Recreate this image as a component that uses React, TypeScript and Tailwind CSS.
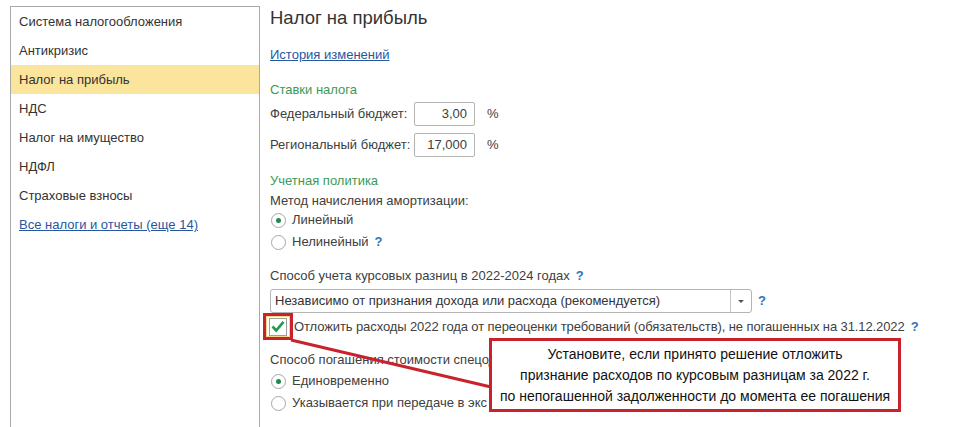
import React from 'react';

const menu = [
  'Система налогообложения',
  'Антикризис',
  'Налог на прибыль',
  'НДС',
  'Налог на имущество',
  'НДФЛ',
  'Страховые взносы',
];

function Help() {
  return <span className="ml-[6px] font-bold text-[#2f74b5]">?</span>;
}

function Radio({ checked, children }: { checked?: boolean; children: React.ReactNode }) {
  return (
    <div className="flex items-center h-[20px]">
      <span className="ml-[1px] w-[15px] h-[15px] rounded-full border border-[#a6a6a6] bg-white flex items-center justify-center shrink-0">
        {checked && <span className="w-[5px] h-[5px] rounded-full bg-[#1f8a4c]" />}
      </span>
      <span className="ml-[6px] whitespace-nowrap">{children}</span>
    </div>
  );
}

function RateRow({ label, value, mt }: { label: string; value: string; mt: string }) {
  return (
    <div className={`flex items-center h-[24px] ${mt}`}>
      <span className="w-[144px]">{label}</span>
      <div className="w-[61px] h-[24px] border border-[#b4b4b4] rounded-[2px] bg-white flex items-center justify-end pr-[7px]">
        {value}
      </div>
      <span className="ml-[12px]">%</span>
    </div>
  );
}

export default function App() {
  return (
    <div
      className="relative w-[953px] h-[427px] overflow-hidden bg-white flex text-[13px] text-[#404040]"
      style={{ fontFamily: '"Liberation Sans", Arial, sans-serif' }}
    >
      {/* left navigation */}
      <div className="ml-[10px] mt-[6px] w-[250px] h-[421px] shrink-0 border-l border-t border-r border-[#a9a9a9]">
        {menu.map((m, i) => (
          <div
            key={m}
            className={`h-[29px] flex items-center pl-[8px] text-[#333333] ${i === 2 ? 'bg-[#fbe49c]' : ''}`}
          >
            {m}
          </div>
        ))}
        <div className="h-[29px] flex items-center pl-[8px]">
          <span className="text-[#2757a0] underline">Все налоги и отчеты (еще 14)</span>
        </div>
      </div>

      {/* main form */}
      <div className="ml-[10px] flex flex-col">
        <div className="mt-[6px] h-[24px] flex items-center text-[18.5px] text-[#333333]">Налог на прибыль</div>
        <div className="mt-[15px] h-[20px] flex items-center">
          <span className="text-[#2757a0] underline">История изменений</span>
        </div>
        <div className="mt-[15px] h-[20px] flex items-center text-[#3c9a56]">Ставки налога</div>
        <RateRow label="Федеральный бюджет:" value="3,00" mt="mt-[2px]" />
        <RateRow label="Региональный бюджет:" value="17,000" mt="mt-[7px]" />

        <div className="mt-[14px] h-[20px] flex items-center text-[#3c9a56]">Учетная политика</div>
        <div className="h-[19px] flex items-center">Метод начисления амортизации:</div>
        <Radio checked>Линейный</Radio>
        <div className="mt-[2px]">
          <Radio>
            Нелинейный
            <Help />
          </Radio>
        </div>

        <div className="mt-[14px] h-[20px] flex items-center">
          Способ учета курсовых разниц в 2022-2024 годах
          <Help />
        </div>
        <div className="mt-[3px] flex items-center">
          <div className="w-[482px] h-[24px] border border-[#b4b4b4] rounded-[3px] bg-white flex items-center">
            <span className="flex-1 pl-[4px] text-[#333333]">
              Независимо от признания дохода или расхода (рекомендуется)
            </span>
            <span className="w-[21px] h-full border-l border-[#c4c4c4] flex items-center justify-center">
              <span className="w-0 h-0 border-l-[3px] border-r-[3px] border-t-[3px] border-l-transparent border-r-transparent border-t-[#555555]" />
            </span>
          </div>
          <Help />
        </div>

        <div className="flex items-center h-[27px]">
          <div className="-ml-[7px] w-[30px] h-[27px] border-[3px] border-[#c8232c] flex items-center justify-center">
            <div className="w-[24px] h-[21px] border border-[#f3d98a] flex items-center justify-center">
              <div className="w-[18px] h-[18px] border border-[#9e9e9e] bg-white flex items-center justify-center">
                <svg width="14" height="13" viewBox="0 0 14 13">
                  <path d="M1.5 6.5 L5.2 10.5 L12.5 1.8" fill="none" stroke="#1f9a50" strokeWidth="2.6" />
                </svg>
              </div>
            </div>
          </div>
          <span className="ml-[1px] tracking-[-0.1px]">
            Отложить расходы 2022 года от переоценки требований (обязательств), не погашенных на 31.12.2022
          </span>
          <Help />
        </div>

        {/* the callout hides the rest of these two rows */}
        <div className="mt-[10px] h-[20px] flex items-center whitespace-nowrap">Способ погашения стоимости спецод</div>
        <div className="mt-[1px]">
          <Radio checked>Единовременно</Radio>
        </div>
        <div className="mt-[2px]">
          <Radio>Указывается при передаче в экс</Radio>
        </div>
      </div>

      {/* annotation */}
      <svg className="absolute left-0 top-0 pointer-events-none" width="953" height="427">
        <line x1="291" y1="340" x2="491" y2="387" stroke="#c8232c" strokeWidth="3" />
      </svg>
      <div className="absolute left-[489px] top-[338px] w-[412px] h-[74px] border-[3px] border-[#c8232c] bg-white flex flex-col items-center justify-center text-[14px] text-[#111111] leading-[21px]">
        <div>Установите, если принято решение отложить</div>
        <div>признание расходов по курсовым разницам за 2022 г.</div>
        <div>по непогашенной задолженности до момента ее погашения</div>
      </div>
    </div>
  );
}
